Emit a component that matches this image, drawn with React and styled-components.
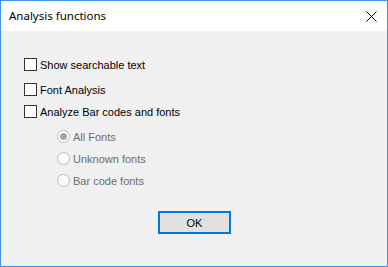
import React from 'react';
import styled, { createGlobalStyle } from 'styled-components';

const GlobalStyle = createGlobalStyle`
  html, body {
    margin: 0;
    padding: 0;
    background: #f0f0f0;
  }
  * {
    box-sizing: border-box;
  }
`;

const Window = styled.div`
  width: 388px;
  height: 267px;
  border: 1px solid #3b93ec;
  background: #f0f0f0;
  display: flex;
  flex-direction: column;
  font-family: 'Liberation Sans', Arial, sans-serif;
  font-size: 11px;
  color: #000;
`;

const TitleBar = styled.div`
  height: 30px;
  background: #fff;
  display: flex;
  align-items: center;
  justify-content: space-between;
  padding: 0 9px 0 8px;
`;

const Title = styled.span`
  font-family: 'Noto Sans', 'Open Sans', sans-serif;
  font-size: 11.5px;
  margin-top: -1px;
`;

const CloseIcon = styled.svg`
  width: 11px;
  height: 11px;
  margin-right: 1px;
`;

const Body = styled.div`
  flex: 1;
  display: flex;
  flex-direction: column;
  padding: 27px 0 0 23px;
`;

const Row = styled.label`
  display: flex;
  align-items: center;
  height: 13px;
  margin-bottom: ${(p) => p.$gap}px;
  color: ${(p) => (p.$disabled ? '#6d6d6d' : '#000')};
`;

const CheckBox = styled.span`
  width: 13px;
  height: 13px;
  border: 1px solid #333;
  background: #fff;
  margin-right: 3px;
  flex-shrink: 0;
`;

const RadioGroup = styled.div`
  display: flex;
  flex-direction: column;
  margin-left: 33px;
`;

const Radio = styled.span`
  width: 13px;
  height: 13px;
  border-radius: 50%;
  border: 1px solid #bcbcbc;
  background: #fcfcfc;
  margin-right: 3px;
  flex-shrink: 0;
  display: flex;
  align-items: center;
  justify-content: center;

  &::after {
    content: '';
    display: ${(p) => (p.$checked ? 'block' : 'none')};
    width: 7px;
    height: 7px;
    border-radius: 50%;
    background: #a3a3a3;
  }
`;

const Footer = styled.div`
  display: flex;
  justify-content: center;
  margin-top: 24px;
  margin-left: -23px;
`;

const Button = styled.button`
  width: 73px;
  height: 23px;
  border: 2px solid #0078d7;
  background: #e1e1e1;
  font-family: 'Liberation Sans', Arial, sans-serif;
  font-size: 11px;
  color: #000;
  padding: 0;
  margin-left: 1px;
`;

export default function App() {
  return (
    <>
      <GlobalStyle />
      <Window>
        <TitleBar>
          <Title>Analysis functions</Title>
          <CloseIcon viewBox="0 0 11 11">
            <path d="M0.5 0.5 L10.5 10.5 M10.5 0.5 L0.5 10.5" stroke="#000" strokeWidth="1" />
          </CloseIcon>
        </TitleBar>
        <Body>
          <Row $gap={12}>
            <CheckBox />
            Show searchable text
          </Row>
          <Row $gap={9}>
            <CheckBox />
            Font Analysis
          </Row>
          <Row $gap={12}>
            <CheckBox />
            Analyze Bar codes and fonts
          </Row>
          <RadioGroup>
            <Row $gap={9} $disabled>
              <Radio $checked />
              All Fonts
            </Row>
            <Row $gap={9} $disabled>
              <Radio />
              Unknown fonts
            </Row>
            <Row $gap={0} $disabled>
              <Radio />
              Bar code fonts
            </Row>
          </RadioGroup>
          <Footer>
            <Button>OK</Button>
          </Footer>
        </Body>
      </Window>
    </>
  );
}
